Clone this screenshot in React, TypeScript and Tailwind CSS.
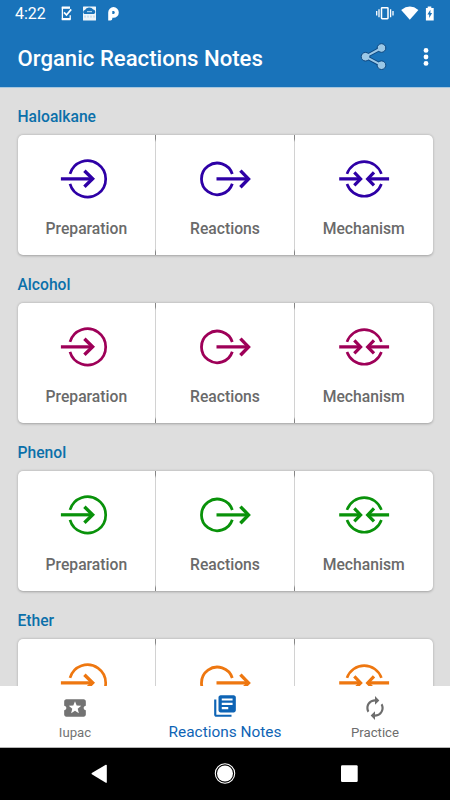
import React from "react";

type Kind = "prep" | "react" | "mech";

const sections = [
  { title: "Haloalkane", color: "#2e00a6", labelled: true },
  { title: "Alcohol", color: "#9e0058", labelled: true },
  { title: "Phenol", color: "#09920a", labelled: true },
  { title: "Ether", color: "#ee7710", labelled: false },
];

const cells: { kind: Kind; label: string }[] = [
  { kind: "prep", label: "Preparation" },
  { kind: "react", label: "Reactions" },
  { kind: "mech", label: "Mechanism" },
];

function ReactionIcon({ kind, color }: { kind: Kind; color: string }) {
  return (
    <svg className="block h-11 w-[52px] shrink-0" viewBox="0 0 52 44" fill="none" stroke={color} strokeWidth="2.8">
      {kind === "prep" && (
        <>
          <path d="M10 16.9A18.2 18.2 0 1 1 10 26.9" strokeWidth="2.7" />
          <path d="M.9 21.8H32" strokeWidth="3.2" />
          <path d="M24.4 13.8L32.6 21.8L24.4 29.8" strokeWidth="3.4" />
        </>
      )}
      {kind === "react" && (
        <>
          <path d="M33.3 17A15.8 15.8 0 1 0 33.3 26.8" />
          <path d="M17.5 21.9H49" strokeWidth="3.2" />
          <path d="M41.4 13.6L49.5 21.9L41.4 30.2" strokeWidth="3.4" />
        </>
      )}
      {kind === "mech" && (
        <>
          <path d="M9 16.9A18.2 18.2 0 0 1 43.4 16.9M9 27A18.2 18.2 0 0 0 43.4 27" strokeWidth="2.6" />
          <path d="M1.2 21.9H22.5M51.1 21.9H30" strokeWidth="3.2" />
          <path d="M16.3 15.4L22.6 21.9L16.3 28.4M36 15.4L29.7 21.9L36 28.4" strokeWidth="3.2" />
        </>
      )}
    </svg>
  );
}

function StatusBar() {
  return (
    <div className="flex h-[27px] items-center justify-between pl-[15px] pr-[14px] text-white">
      <div className="flex items-center">
        <span className="w-[45px] text-[16px] leading-[27px]">4:22</span>
        <svg className="h-4 w-[60px]" viewBox="60 5.4 60 16">
          <path d="M69.5 7H62.4V18.4H70.2V14.7" fill="none" stroke="#fff" strokeWidth="1.3" />
          <path d="M61.8 7H70M61.8 18.6H70.4" stroke="#fff" strokeWidth="2.2" />
          <path d="M64 11.7L66.5 14.4L71.2 8.8" fill="none" stroke="#fff" strokeWidth="1.7" />
          <rect x="83" y="6" width="13" height="14" rx=".5" fill="#fff" fillOpacity=".93" />
          <path d="M84.3 13.5a2.2 2.2 0 0 1 .7-4.1a4.5 4 0 0 1 8.2-.4a2.4 2.4 0 0 1 .8 4.5z" fill="#1a73ba" />
          <path d="M87 11H92" stroke="#a5cae5" strokeWidth="1.2" />
          <path d="M85 15v2M88 15v2M91 15v2M94 15v2" stroke="#8bb9da" strokeWidth=".7" />
          <path fillRule="evenodd" d="M108.2 19.8V11.8a5.3 5.3 0 1 1 5.3 5.3h-1.2v1.1q0 1.6-1.8 1.6zM112.3 10.4v3.1h1.3a1.6 1.6 0 0 0 0-3.1z" fill="#fff" />
        </svg>
      </div>
      <svg className="h-[18px] w-[60px]" viewBox="376 4.5 60 18" fill="#fff">
        <rect x="381.5" y="7.2" width="6.5" height="11" rx=".6" fill="none" stroke="#fff" strokeWidth="1.5" />
        <path d="M379 8.7v8M376.7 10.5v4.6M390.6 8.7v8M393 10.5v4.6" stroke="#fff" strokeWidth="1.3" />
        <path d="M401.2 9.4q8.7-6.6 17.2 0L409.8 19.2z" />
        <path fillRule="evenodd" d="M427.7 6h3.6v1.4h2.4V20H425.9V7.4h1.8zM430.4 9.3l-3 4.8h1.8v3.5l2.9-5h-1.7z" />
      </svg>
    </div>
  );
}

function Header() {
  return (
    <header className="h-[88px] shrink-0 border-b border-[#a7c7df] bg-[#1973ba]">
      <StatusBar />
      <div className="flex h-[60px] items-center justify-between pl-[17.5px] pr-[20px]">
        <h1 className="pt-[2px] text-[22.15px] font-medium leading-7 text-white">Organic Reactions Notes</h1>
        <div className="flex items-center gap-[33px]">
          <svg className="h-[30px] w-[30px]" viewBox="359 42 30 30">
            <path d="M381.5 48L365.5 56.7L381.5 65.2" fill="none" stroke="#0e477f" strokeWidth="3.8" />
            <g fill="#9bc8e7" stroke="#0e477f" strokeWidth="1">
              <circle cx="381.5" cy="48" r="4.3" />
              <circle cx="365.5" cy="56.7" r="4.3" />
              <circle cx="381.5" cy="65.2" r="4.3" />
            </g>
            <path d="M381.5 48L365.5 56.7L381.5 65.2" fill="none" stroke="#9bc8e7" strokeWidth="2" />
          </svg>
          <svg className="h-[30px] w-2" viewBox="422 42 8 30" fill="#fff">
            <circle cx="426" cy="50.4" r="2.4" />
            <circle cx="426" cy="57" r="2.4" />
            <circle cx="426" cy="63.4" r="2.4" />
          </svg>
        </div>
      </div>
    </header>
  );
}

function Section({ title, color, labelled }: { title: string; color: string; labelled: boolean }) {
  return (
    <section className="h-[168px] shrink-0 px-[17.5px]">
      <h2 className="h-[47px] pt-[18px] text-[15.65px] font-medium leading-[21px] text-[#0b70aa]">{title}</h2>
      <div className="flex h-[120px] overflow-hidden rounded-[5px] bg-white shadow-[0_0.5px_2.5px_rgba(0,0,0,0.28)]">
        {cells.map((cell, i) => (
          <React.Fragment key={cell.kind}>
            {i > 0 && (
              <div className="w-px shrink-0 bg-[linear-gradient(to_bottom,#858585_0px,#858585_4px,#d2d2d2_7px,#d2d2d2_114px,#858585_117px)]" />
            )}
            <div className="flex flex-1 flex-col items-center pt-[22px]">
              <ReactionIcon kind={cell.kind} color={color} />
              {labelled && (
                <span className="mt-[18px] text-[15.7px] font-medium leading-5 text-[#6a6a6a]">{cell.label}</span>
              )}
            </div>
          </React.Fragment>
        ))}
      </div>
    </section>
  );
}

function BottomTabs() {
  return (
    <nav className="grid h-[62px] shrink-0 grid-cols-3 border-b border-[#b5b5b5] bg-white">
      <div className="flex flex-col items-center pt-[9px] text-[#737373]">
        <svg className="h-[26px] w-[26px]" viewBox="0 0 24 24" fill="currentColor">
          <path d="M20 12c0-1.1.9-2 2-2V6c0-1.1-.9-2-2-2H4c-1.1 0-1.99.9-1.99 2v4c1.1 0 1.99.9 1.99 2s-.89 2-2 2v4c0 1.1.9 2 2 2h16c1.1 0 2-.9 2-2v-4c-1.1 0-2-.9-2-2zm-4.42 4.8L12 14.5l-3.58 2.3 1.08-4.12-3.29-2.69 4.24-.25L12 5.8l1.54 3.95 4.24.25-3.29 2.69 1.09 4.11z" />
        </svg>
        <span className="mt-[3px] text-[13.2px] leading-[18px]">Iupac</span>
      </div>
      <div className="flex flex-col items-center pt-[7px] text-[#0e64b5]">
        <svg className="h-[26px] w-[26px]" viewBox="0 0 24 24" fill="currentColor">
          <path d="M4 6H2v14c0 1.1.9 2 2 2h14v-2H4V6zm16-4H8c-1.1 0-2 .9-2 2v12c0 1.1.9 2 2 2h12c1.1 0 2-.9 2-2V4c0-1.1-.9-2-2-2zm-1 9H9V9h10v2zm-4 4H9v-2h6v2zm4-8H9V5h10v2z" />
        </svg>
        <span className="mt-[3px] whitespace-nowrap text-[15.4px] leading-5">Reactions Notes</span>
      </div>
      <div className="flex flex-col items-center pt-[9px] text-[#6d6d6d]">
        <svg className="h-[26px] w-[26px]" viewBox="0 0 24 24" fill="currentColor">
          <path d="M12 6v3l4-4-4-4v3c-4.42 0-8 3.58-8 8 0 1.57.46 3.03 1.24 4.26L6.7 14.8c-.45-.83-.7-1.79-.7-2.8 0-3.31 2.69-6 6-6zm6.76 1.74L17.3 9.2c.44.84.7 1.79.7 2.8 0 3.31-2.69 6-6 6v-3l-4 4 4 4v-3c4.42 0 8-3.58 8-8 0-1.57-.46-3.03-1.24-4.26z" />
        </svg>
        <span className="mt-[3px] text-[13.2px] leading-[18px]">Practice</span>
      </div>
    </nav>
  );
}

function SystemNav() {
  return (
    <div className="h-[52px] shrink-0 bg-black">
      <svg className="block h-[52px] w-[450px]" viewBox="0 748 450 52" fill="#fff">
        <path d="M106.8 765.3V782.7Q106.4 783 105.8 782.7L91.8 774.3Q91.2 773.7 91.8 773L105.8 764.8Q106.6 764.6 106.8 765.3z" />
        <circle cx="225" cy="773.5" r="9.7" fill="none" stroke="#fff" strokeWidth="1.1" />
        <circle cx="225" cy="773.5" r="8" />
        <rect x="341" y="765.3" width="16.7" height="16.7" rx="1.2" />
      </svg>
    </div>
  );
}

export default function App() {
  return (
    <div className="flex h-[800px] w-[450px] flex-col overflow-hidden bg-[#dedede] font-['Roboto',sans-serif]">
      <Header />
      <main className="flex min-h-0 flex-1 flex-col overflow-hidden">
        {sections.map((s) => (
          <Section key={s.title} title={s.title} color={s.color} labelled={s.labelled} />
        ))}
      </main>
      <BottomTabs />
      <SystemNav />
    </div>
  );
}
